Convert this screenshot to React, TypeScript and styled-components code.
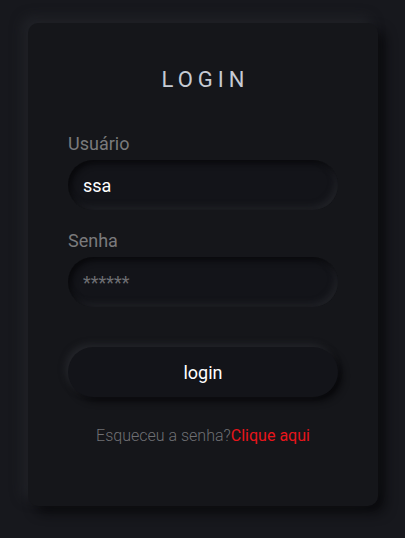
import React from "react";
import styled, { createGlobalStyle } from "styled-components";

const Global = createGlobalStyle`
  html, body {
    margin: 0;
    padding: 0;
    background: #17181d;
  }
  body {
    font-family: Roboto, "Liberation Sans", sans-serif;
  }
  * { box-sizing: border-box; }
`;

const Page = styled.main`
  min-height: 538px;
  padding: 23px 0 0 28px;
`;

const Card = styled.form`
  width: 350px;
  height: 483px;
  background: #15161a;
  border-radius: 10px;
  box-shadow: -6px -6px 12px rgba(40, 41, 47, 0.55), 7px 7px 12px rgba(8, 8, 10, 0.8);
  padding: 44px 40px 0;
  display: flex;
  flex-direction: column;
`;

const Title = styled.h1`
  margin: 0 0 40px;
  text-align: center;
  font-size: 22px;
  font-weight: 400;
  letter-spacing: 5px;
  text-indent: 5px;
  color: #c6cbd4;
  line-height: 26px;
`;

const Field = styled.label`
  display: flex;
  flex-direction: column;
  gap: 5px;
  margin-bottom: 20px;
`;

const LabelText = styled.span`
  font-size: 18px;
  color: #7a7a7c;
  line-height: 22px;
`;

const Input = styled.input`
  width: 270px;
  height: 50px;
  border: none;
  outline: none;
  border-radius: 25px;
  background: #131419;
  box-shadow: inset 3px 3px 6px rgba(6, 6, 8, 0.85), inset -3px -3px 6px rgba(44, 45, 50, 0.6);
  padding: 0 15px;
  font-family: inherit;
  font-size: 18px;
  font-weight: 400;
  color: #ffffff;
  &::placeholder {
    color: #6d6e72;
  }
`;

const Button = styled.button`
  margin-top: 20px;
  width: 270px;
  height: 50px;
  border: none;
  border-radius: 25px;
  background: #131419;
  box-shadow: -3px -3px 6px rgba(48, 49, 55, 0.55), 4px 4px 7px rgba(6, 6, 8, 0.85);
  color: #ffffff;
  font-family: inherit;
  font-size: 18px;
  font-weight: 400;
  cursor: pointer;
`;

const Forgot = styled.p`
  margin: 29px 0 0;
  text-align: center;
  font-size: 16px;
  font-weight: 300;
  color: #6f7074;
  line-height: 20px;
`;

const Link = styled.a`
  color: #e8151b;
  font-weight: 400;
  text-decoration: none;
`;

export default function App() {
  return (
    <>
      <Global />
      <Page>
        <Card onSubmit={(e) => e.preventDefault()}>
          <Title>LOGIN</Title>
          <Field>
            <LabelText>Usuário</LabelText>
            <Input type="text" defaultValue="ssa" />
          </Field>
          <Field>
            <LabelText>Senha</LabelText>
            <Input type="password" placeholder="******" />
          </Field>
          <Button type="submit">login</Button>
          <Forgot>
            Esqueceu a senha?<Link href="#">Clique aqui</Link>
          </Forgot>
        </Card>
      </Page>
    </>
  );
}
